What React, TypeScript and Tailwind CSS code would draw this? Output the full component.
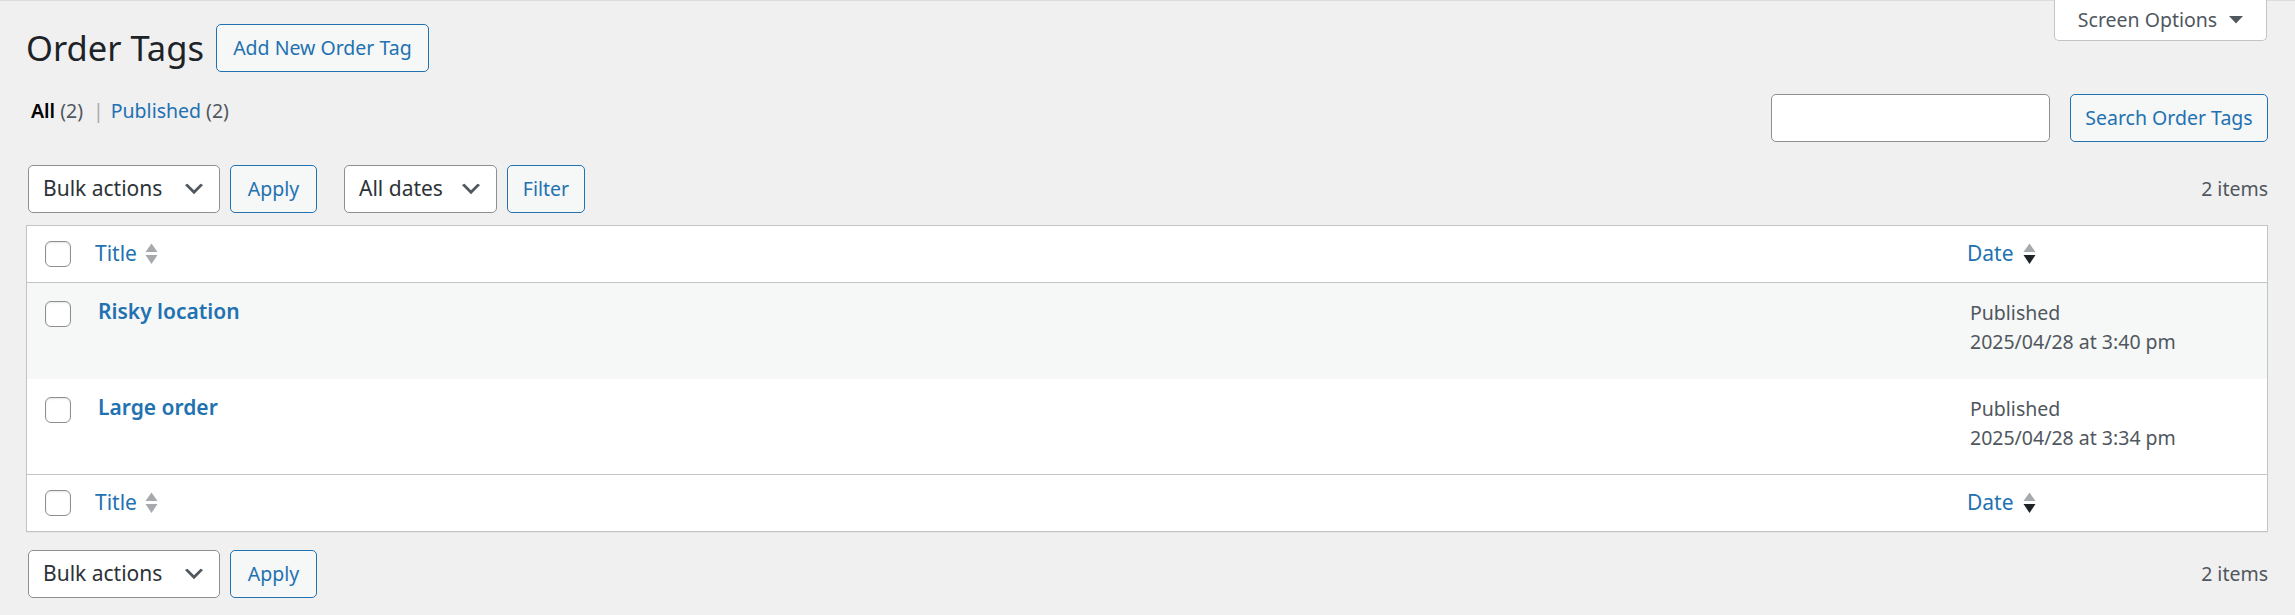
import React from "react";

const Chevron = () => (
  <svg width="26" height="26" viewBox="0 0 20 20" className="shrink-0">
    <path d="M5 6l5 5 5-5 2 1-7 7-7-7 2-1z" fill="#50575e" />
  </svg>
);

const SortIcon = ({ active }: { active?: boolean }) => (
  <svg width="13" height="24" viewBox="0 0 13 24" className="shrink-0">
    <polygon points="0.5,10 6.5,1.5 12.5,10" fill="#a7aaad" />
    <polygon points="0.5,13 12.5,13 6.5,22" fill={active ? "#1d2327" : "#a7aaad"} />
  </svg>
);

const Checkbox = () => (
  <div className="w-[26px] h-[26px] rounded-[6px] border border-[#8c8f94] bg-white shadow-[inset_0_1px_2px_rgba(0,0,0,0.1)]" />
);

const Select = ({ label, w }: { label: string; w: string }) => (
  <div
    className={`${w} h-[48px] flex items-center justify-between pl-[14px] pr-[12px] bg-white border border-[#8c8f94] rounded-[5px] text-[21px] text-[#2c3338]`}
  >
    <span className="whitespace-nowrap">{label}</span>
    <Chevron />
  </div>
);

const Button = ({ label, w }: { label: string; w: string }) => (
  <div
    className={`${w} h-[48px] flex items-center justify-center bg-[#f6f7f7] border border-[#2271b1] rounded-[5px] text-[19.5px] text-[#2271b1] whitespace-nowrap`}
  >
    {label}
  </div>
);

const Tablenav = ({ top }: { top?: boolean }) => (
  <div className="flex items-center justify-between">
    <div className="flex items-center ml-[2px]">
      <Select label="Bulk actions" w="w-[192px]" />
      <div className="ml-[10px]">
        <Button label="Apply" w="w-[87px]" />
      </div>
      {top && (
        <>
          <div className="ml-[27px]">
            <Select label="All dates" w="w-[153px]" />
          </div>
          <div className="ml-[10px]">
            <Button label="Filter" w="w-[78px]" />
          </div>
        </>
      )}
    </div>
    <div className="text-[19.5px] text-[#50575e]">2 items</div>
  </div>
);

const HeadRow = ({ bottomBorder }: { bottomBorder?: boolean }) => (
  <div
    className={`grid grid-cols-[56px_1fr_312px] h-[57px] items-center ${
      bottomBorder ? "border-b border-[#c3c4c7]" : "border-t border-[#c3c4c7]"
    }`}
  >
    <div className="pl-[18px]">
      <Checkbox />
    </div>
    <div className="pl-[12px] flex items-center gap-[8px] text-[21px] text-[#2271b1]">
      <span>Title</span>
      <SortIcon />
    </div>
    <div className="pl-[12px] flex items-center gap-[9px] text-[21px] text-[#2271b1]">
      <span>Date</span>
      <SortIcon active />
    </div>
  </div>
);

const Row = ({
  title,
  date,
  striped,
}: {
  title: string;
  date: string;
  striped?: boolean;
}) => (
  <div
    className={`grid grid-cols-[56px_1fr_312px] ${
      striped ? "bg-[#f6f7f7] h-[96px]" : "bg-white h-[95px]"
    }`}
  >
    <div className="pl-[18px] pt-[18px]">
      <Checkbox />
    </div>
    <div className="pl-[15px] pt-[14px] text-[21px] font-semibold text-[#2271b1] leading-[1.4]">
      {title}
    </div>
    <div className="pl-[15px] pt-[15px] text-[19.5px] text-[#50575e] leading-[1.5]">
      <div>Published</div>
      <div>{date}</div>
    </div>
  </div>
);

export default function App() {
  return (
    <div className="relative min-h-[615px] bg-[#f0f0f1] border-t border-[#dcdcde] font-['Noto_Sans',sans-serif]">
      <div className="absolute top-[-1px] right-[28px] w-[213px] h-[41px] bg-white border border-t-0 border-[#c3c4c7] rounded-b-[5px] flex items-center justify-center gap-[12px] text-[19.5px] text-[#50575e]">
        <span>Screen Options</span>
        <svg width="14" height="8" viewBox="0 0 14 8">
          <polygon points="0,0 14,0 7,7.5" fill="#50575e" />
        </svg>
      </div>

      <div className="pl-[26px] pr-[27px]">
        <div className="flex items-center pt-[23px]">
          <h1 className="text-[34.5px] leading-[1.3] text-[#1d2327] mr-[12px]">
            Order Tags
          </h1>
          <Button label="Add New Order Tag" w="w-[213px]" />
        </div>

        <div className="flex justify-between items-start mt-[22px]">
          <div className="mt-[2px] ml-[5px] text-[19.5px] leading-[1.5] text-[#50575e] flex items-center">
            <span className="font-semibold text-black">All</span>
            <span className="ml-[5px]">(2)</span>
            <span className="ml-[10px] mr-[7px] text-[#a7aaad]">|</span>
            <span className="text-[#2271b1]">Published</span>
            <span className="ml-[5px]">(2)</span>
          </div>
          <div className="flex items-center gap-[20px]">
            <div className="w-[279px] h-[48px] bg-white border border-[#8c8f94] rounded-[5px]" />
            <Button label="Search Order Tags" w="w-[198px]" />
          </div>
        </div>

        <div className="mt-[23px]">
          <Tablenav top />
        </div>

        <div className="mt-[12px] bg-white border border-[#c3c4c7] shadow-[0_1px_1px_rgba(0,0,0,0.04)]">
          <HeadRow bottomBorder />
          <Row title="Risky location" date="2025/04/28 at 3:40 pm" striped />
          <Row title="Large order" date="2025/04/28 at 3:34 pm" />
          <HeadRow />
        </div>

        <div className="mt-[18px]">
          <Tablenav />
        </div>
      </div>
    </div>
  );
}
